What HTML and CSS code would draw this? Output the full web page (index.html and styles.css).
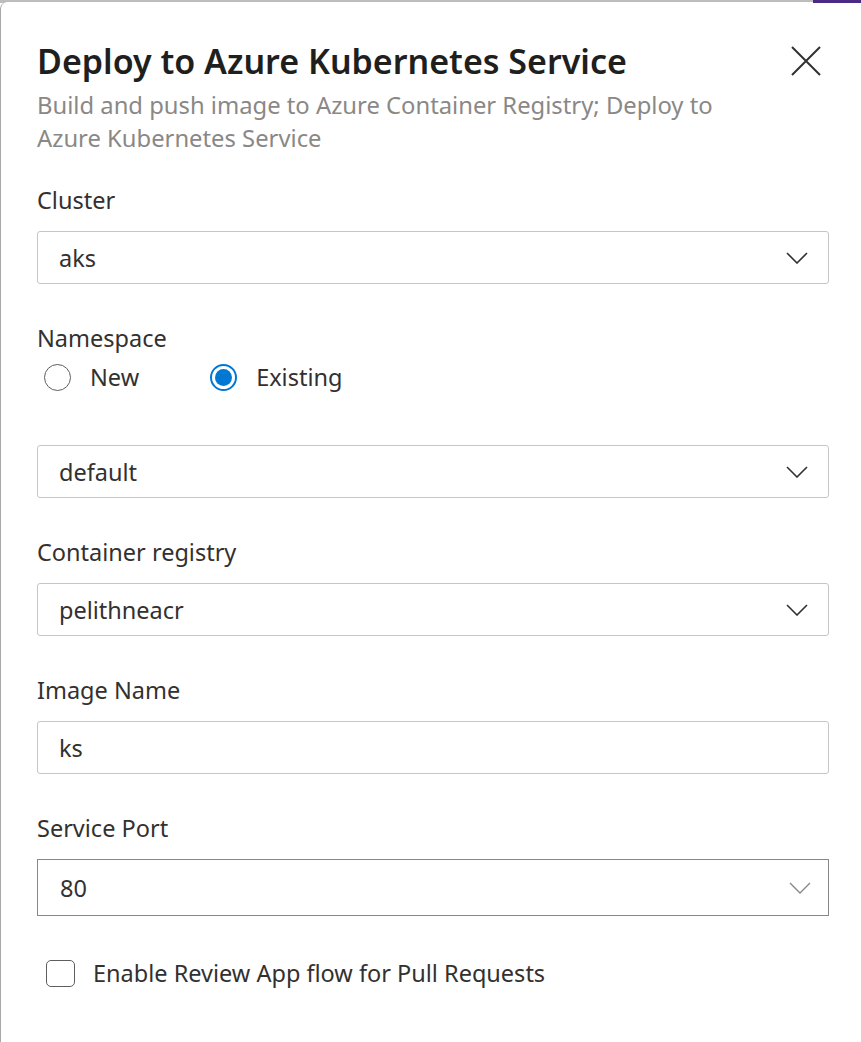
FILE: index.html
```html
<!DOCTYPE html>
<html>
<head>
<meta charset="utf-8">
<link rel="stylesheet" href="styles.css">
</head>
<body>
<div class="topstrip"><div class="strip-grey"></div><div class="strip-purple"></div></div>
<div class="panel">
  <div class="header">
    <div class="titles">
      <h1 class="title">Deploy to Azure Kubernetes Service</h1>
      <p class="subtitle">Build and push image to Azure Container Registry; Deploy to Azure Kubernetes Service</p>
    </div>
    <button class="close" aria-label="Close">
      <svg width="30" height="30" viewBox="0 0 30 30"><path d="M1 1 L29 29 M29 1 L1 29" stroke="#323130" stroke-width="2" fill="none"/></svg>
    </button>
  </div>

  <div class="field">
    <div class="label">Cluster</div>
    <div class="select"><span>aks</span><svg class="chev" width="22" height="12" viewBox="0 0 22 12"><path d="M1 1 L11 11 L21 1" stroke="#323130" stroke-width="1.6" fill="none"/></svg></div>
  </div>

  <div class="field ns">
    <div class="label">Namespace</div>
    <div class="radios">
      <label class="radio"><span class="circle"></span><span>New</span></label>
      <label class="radio checked"><span class="circle"><span class="dot"></span></span><span>Existing</span></label>
    </div>
    <div class="select"><span>default</span><svg class="chev" width="22" height="12" viewBox="0 0 22 12"><path d="M1 1 L11 11 L21 1" stroke="#323130" stroke-width="1.6" fill="none"/></svg></div>
  </div>

  <div class="field">
    <div class="label">Container registry</div>
    <div class="select"><span>pelithneacr</span><svg class="chev" width="22" height="12" viewBox="0 0 22 12"><path d="M1 1 L11 11 L21 1" stroke="#323130" stroke-width="1.6" fill="none"/></svg></div>
  </div>

  <div class="field">
    <div class="label">Image Name</div>
    <div class="select input"><span>ks</span></div>
  </div>

  <div class="field">
    <div class="label">Service Port</div>
    <div class="select port"><span>80</span><svg class="chev" width="22" height="12" viewBox="0 0 22 12"><path d="M1 1 L11 11 L21 1" stroke="#8a8886" stroke-width="1.4" fill="none"/></svg></div>
  </div>

  <label class="check"><span class="box"></span><span>Enable Review App flow for Pull Requests</span></label>
</div>
</body>
</html>
```
FILE: styles.css
```css
html, body { margin: 0; padding: 0; }
body {
  background: #ffffff;
  font-family: "Noto Sans", "Open Sans", sans-serif;
  color: #323130;
  width: 861px;
  height: 1042px;
  overflow: hidden;
}
.topstrip { display: flex; height: 3px; background: #bdbdbd; }
.strip-grey { flex: 1; }
.strip-purple { width: 48px; background: #4b2a86; }
.panel {
  background: #fff;
  border-left: 1px solid #a8a8a8;
  border-top-left-radius: 7px;
  margin-top: -1px;
  height: 1040px;
  padding: 0 32px 0 36px;
  box-sizing: border-box;
}
.header { display: flex; justify-content: space-between; align-items: flex-start; padding-top: 37px; }
.title {
  margin: 0;
  font-size: 34px;
  font-weight: 600;
  line-height: 44px;
  color: #201f1e;
}
.subtitle {
  margin: 6px 0 0;
  font-size: 23.8px;
  line-height: 33px;
  color: #8a8886;
  width: 700px;
}
.close { background: none; border: 0; padding: 0; margin: 7px 8px 0 0; width: 30px; height: 30px; }
.close svg { display: block; }
.field { margin-top: 39px; }
.header + .field { margin-top: 30px; }
.label { font-size: 23.5px; line-height: 30px; color: #323130; }
.select {
  margin-top: 16px;
  height: 53px;
  box-sizing: border-box;
  border: 1px solid #c8c6c4;
  border-radius: 3px;
  display: flex;
  align-items: center;
  justify-content: space-between;
  padding: 0 20px 0 21px;
  font-size: 23.5px;
  color: #323130;
}
.port { height: 57px; border-color: #8a8886; border-radius: 0; padding-left: 22px; padding-right: 17px; }
.radios { display: flex; gap: 71px; margin-top: 8px; padding-left: 7px; }
.radio { display: flex; align-items: center; gap: 19px; font-size: 23.5px; }
.circle {
  width: 27px; height: 27px; border-radius: 50%;
  border: 1px solid #605e5c; box-sizing: border-box;
  display: flex; align-items: center; justify-content: center;
}
.checked .circle { border: 2px solid #0078d4; }
.dot { width: 17px; height: 17px; border-radius: 50%; background: #0078d4; }
.ns .select { margin-top: 52px; }
.check {
  display: flex; align-items: center; gap: 18px;
  margin-top: 41px; padding-left: 9px;
  font-size: 23.5px;
}
.box { width: 29px; height: 27px; box-sizing: border-box; border: 1px solid #605e5c; border-radius: 5px; }
```
